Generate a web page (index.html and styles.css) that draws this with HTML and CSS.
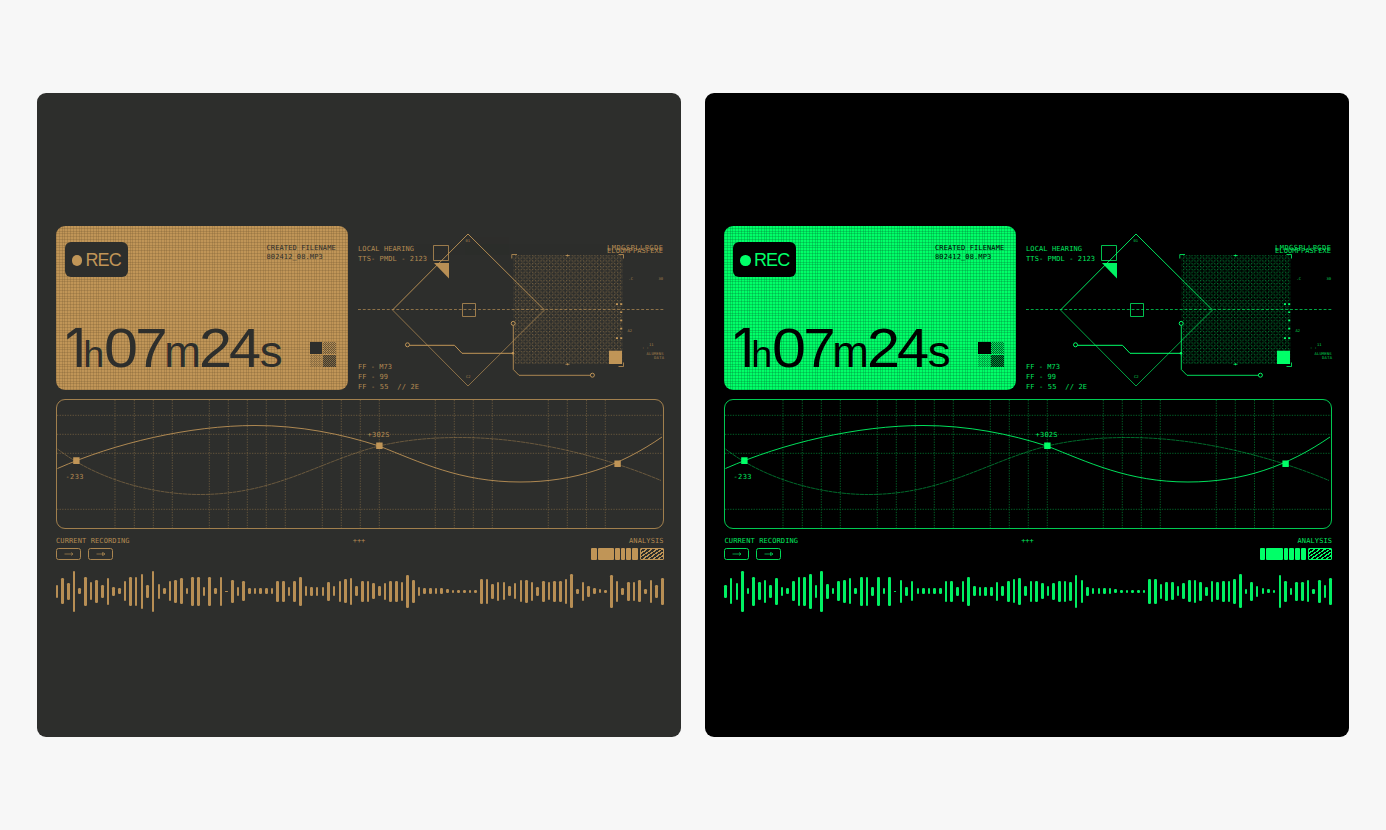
FILE: index.html
```
<!DOCTYPE html>
<html lang="en">
<head>
<meta charset="utf-8">
<title>Recorder</title>
<link rel="stylesheet" href="styles.css">
</head>
<body>
<main class="stage">
  <section class="panel amber"></section>
  <section class="panel green"></section>
</main>
<template id="recorder">
  <div class="top">
    <div class="card">
      <div class="card-head">
        <div class="rec"><i class="rec-dot"></i><span>REC</span></div>
        <p class="mono file">CREATED FILENAME<br>802412_08.MP3</p>
      </div>
      <div class="card-foot">
        <svg class="time" viewBox="0 0 226 50" aria-label="1h07m24s">
          <text class="t-one" transform="translate(-.3 43.3)">1</text>
          <text class="t-h" transform="translate(18.2 43.3) scale(1.02 1)">h</text>
          <text transform="translate(38.9 43.3) scale(1.09 1)">0</text>
          <text transform="translate(70.3 43.3) scale(1.04 1)">7</text>
          <text class="t-m" transform="translate(99.2 43.3)">m</text>
          <text transform="translate(134 43.3) scale(1.06 1)">2</text>
          <text transform="translate(164.1 43.3) scale(1.03 1)">4</text>
          <text class="t-m" transform="translate(194.8 43.3) scale(1.04 1)">s</text>
        </svg>
        <div class="swatches"><i class="s1"></i><i class="s2"></i><i class="s3"></i><i class="s4"></i></div>
      </div>
    </div>
    <svg class="scope" viewBox="358 226 307 164">
      <defs>
        <pattern class="p" id="dots" width="5.66" height="5.66" patternUnits="userSpaceOnUse"><path class="fill" d="M0 0h1.2v1.2H0zM2.83 0h1.2v1.2h-1.2zM0 2.83h1.2v1.2H0zM2.83 2.83h1.2v1.2h-1.2zM1.4 1.4h1v1h-1zM4.2 4.2h1v1h-1z"/></pattern>
      </defs>
      <rect x="513.5" y="255" width="109" height="109" fill="url(#dots)" opacity=".48"/>
      <g class="line">
        <path d="M392.5 310 468 234 544.5 310" opacity=".9"/>
        <path d="M392.5 310 468 386 544.5 310" opacity=".65"/>
        <path d="M358 309.5H664" stroke-dasharray="2.9 1.9" opacity=".65"/>
        <path d="M433.5 245.5h15v15h-15zM462.5 303.5h13v13h-13z" opacity=".75"/>
        <circle cx="407.5" cy="344.8" r="2"/>
        <path d="M409.5 345.3H454.5L462 353.3H513"/>
        <circle cx="513.2" cy="323.4" r="2"/>
        <path d="M513.3 325.5V369.5L519 375.3H590" opacity=".85"/>
        <circle cx="592.4" cy="375.2" r="2"/>
        <path d="M511.8 258.5V254.5H517M618.5 254.5H623.5V258.5M618.5 366.5H623.5V362.5M565.5 255.5h4M567.5 254.5v2M565.5 364.3h4M567.5 363.3v2" opacity=".8"/>
      </g>
      <g class="fill">
        <path d="M434 263H449V278.5Z" opacity=".95"/>
        <rect x="609" y="350.7" width="13" height="13.3"/>
        <circle cx="513" cy="353.3" r="1.3"/>
        <path d="M616 303.2h2v1.7h-2zM620.2 303.2h2v1.7h-2zM620.2 311.4h2v1.7h-2zM620.2 319.6h2v1.7h-2zM620.2 327.8h2v1.7h-2zM616 337.2h2v1.7h-2zM620.2 337.2h2v1.7h-2z"/>
      </g>
      <g class="label">
        <text x="358" y="250.5" textLength="56">LOCAL HEARING</text>
        <text x="358" y="261" textLength="69">TTS- PMDL - 2123</text>
        <text x="358" y="368.6" textLength="34">FF - M73</text>
        <text x="358" y="378.8" textLength="30">FF - 99</text>
        <text x="358" y="388.8" textLength="61">FF - 55&#160; // 2E</text>
        <text x="607" y="250.2" textLength="56">LMDGSPLLPGDE</text>
        <text x="607" y="253" textLength="56">ELOOMPPASFEXE</text>
      </g>
      <g class="tiny">
        <text x="465.5" y="241.5">01</text><text x="466" y="378">C2</text>
        <text x="628.5" y="279.5">.C</text><text x="658.5" y="279.5">30</text>
        <text x="627.5" y="331.5">A2</text><text x="642" y="349">: :</text><text x="649" y="346">11</text>
        <text x="646.5" y="354.8" textLength="17">ALUMENS</text><text x="654" y="359" textLength="10">DATA</text>
      </g>
    </svg>
  </div>
  <svg class="graph" viewBox="56 399 608.4 130">
    <g class="grid"></g>
    <path class="curve dim" d="M57.5 449C95 478 150 494.5 200 494.5C275 494.5 318 462 379 446C405 440 430 437.5 460 437.5C535 437.5 610 459 661 480.5"/>
    <path class="curve" d="M57.5 468.5C115 443 190 425.5 255 425.5C300 425.5 342 434 379 446C420 462 460 482 520 482C575 482 620 466 662 437"/>
    <rect class="frame" x="56.5" y="399.5" width="607" height="129" rx="8.5"/>
    <path class="fill" d="M73.2 457.3h6.4v6.7h-6.4zM376.2 442.5h6.4v6.5h-6.4zM614.4 460.6h6.4v6.4h-6.4z"/>
    <g class="label"><text x="65.5" y="478.8" textLength="18">-233</text><text x="367.5" y="437.2" textLength="22">+302S</text></g>
  </svg>
  <div class="legend">
    <div class="legend-left">
      <p class="mono">CURRENT RECORDING</p>
      <div class="keys">
        <span class="key"><svg viewBox="0 0 10 6"><path d="M.5 3H9M7 1.5 9 3 7 4.5"/></svg></span>
        <span class="key"><svg viewBox="0 0 10 6"><path d="M.5 3H9M7 1.5 9 3 7 4.5M6.5 1.2v3.6"/></svg></span>
      </div>
    </div>
    <p class="mono plus">+++</p>
    <div class="legend-right">
      <p class="mono">ANALYSIS</p>
      <div class="blocks"><i class="b6"></i><i class="b16"></i><i class="b4"></i><i class="b4"></i><i class="b4"></i><i class="b6"></i><i class="hatch"></i></div>
    </div>
  </div>
  <div class="wave"></div>
</template>
<script src="app.js"></script>
</body>
</html>
```
FILE: styles.css
```
* { box-sizing: border-box; }
body { margin: 0; background: #f7f7f7; font-family: "Liberation Sans", Arial, sans-serif; }
p { margin: 0; }
.stage { display: flex; gap: 24.8px; width: 1386px; height: 830px; padding: 93.4px 37px; }
.panel { width: 643.7px; height: 643.6px; flex: none; border-radius: 9px; padding: 132.8px 16px 0 19px; background: var(--bg); color: var(--ink); overflow: hidden; }
.amber { --bg: #2d2e2c; --ink: #c09557; --dot: rgba(110, 84, 46, .25); }
.green { --bg: #000; --ink: #00ff68; --dot: rgba(0, 105, 48, .27); }
.mono { font: 7px/10px "DejaVu Sans Mono", monospace; letter-spacing: .12px; }

.top { display: flex; gap: 10.5px; height: 163.7px; }
.card {
  display: flex; flex-direction: column; justify-content: space-between; flex: none;
  width: 291.5px; height: 163.5px; padding: 16px 12px 16px 8.5px; border-radius: 9px; color: var(--bg);
  background:
    repeating-linear-gradient(90deg, var(--dot) 0 1px, transparent 1px 2.83px),
    repeating-linear-gradient(0deg, var(--dot) 0 1px, transparent 1px 2.83px), var(--ink);
}
.card-head, .card-foot { display: flex; justify-content: space-between; }
.rec { display: flex; align-items: center; gap: 3px; width: 63.5px; height: 34.7px; padding: 2px 0 0 7.5px; border-radius: 6px; background: var(--bg); color: var(--ink); font-size: 18px; letter-spacing: -.8px; }
.rec-dot { width: 10.4px; height: 10.4px; flex: none; border-radius: 50%; background: var(--ink); }
.file { width: 69px; line-height: 9px; margin-top: 2px; white-space: nowrap; }
.card-foot { align-items: flex-end; }
.time { width: 226px; height: 50px; overflow: visible; fill: var(--bg); font-size: 56px; }
.t-one { font-family: Inter, sans-serif; font-size: 53px; }
.t-h { font-size: 37px; }
.t-m { font-size: 44px; }
.swatches { display: grid; grid-template-columns: 12.5px 12.5px; grid-auto-rows: 12.5px; gap: .6px; margin-bottom: 6.5px; }
.s1 { background: var(--bg); }
.s2, .s3, .s4 { background: repeating-conic-gradient(var(--bg) 0 25%, transparent 0 50%) 0 0 / 2px 2px; opacity: .55; }
.s3 { opacity: .28; }
.s4 { background-color: color-mix(in srgb, var(--bg) 45%, transparent); opacity: .85; }

.scope { width: 307px; height: 164px; flex: none; }
.fill { fill: var(--ink); }
.line, .frame, .curve { fill: none; stroke: var(--ink); stroke-width: 1; }
.label { fill: var(--ink); font: 7px "DejaVu Sans Mono", monospace; opacity: .9; }
.tiny { fill: var(--ink); font: 3.8px "DejaVu Sans Mono", monospace; opacity: .8; }

.graph { display: block; width: 608.4px; height: 130px; margin-top: 9.3px; overflow: visible; }
.grid { stroke: var(--ink); stroke-width: .9; stroke-dasharray: 1.3 1.3; opacity: .42; }
.curve { opacity: .88; }
.dim { opacity: .42; stroke-dasharray: 4 .5; }
.frame { opacity: .8; }

.legend { display: flex; justify-content: space-between; height: 36px; padding-top: 6.7px; width: 607.7px; }
.legend .mono { opacity: .9; }
.plus { margin-left: -3px; letter-spacing: 0; }
.keys { display: flex; gap: 7px; margin-top: 2.4px; }
.key { display: flex; align-items: center; justify-content: center; width: 25px; height: 11.6px; border: 1px solid var(--ink); border-radius: 2.5px; opacity: .85; }
.key svg { width: 10px; height: 6px; fill: none; stroke: var(--ink); stroke-width: .7; }
.legend-right { display: flex; flex-direction: column; align-items: flex-end; }
.blocks { display: flex; gap: 1px; height: 12px; margin-top: 2px; }
.blocks i { background: var(--ink); border-radius: 1px; }
.b4 { width: 4.7px; }
.b6 { width: 5.5px; }
.b16 { width: 16.3px; }
.blocks .hatch { width: 24px; margin-left: 1px; border: 1px solid var(--ink); background: repeating-linear-gradient(145deg, var(--ink) 0 1.2px, transparent 1.2px 2.9px); }

.wave { display: flex; align-items: center; justify-content: space-between; height: 42px; margin-top: 5px; width: 608px; margin-left: -.3px; }
.wave i { width: 2.6px; border-radius: 1.2px; background: var(--ink); opacity: .94; }
```
FILE: app.js
```
const bars = [38,78,52,122,18,88,54,68,38,80,26,18,60,88,88,104,38,122,46,18,60,68,78,18,88,88,26,88,18,88,4,68,26,60,18,
  18,18,18,18,62,62,26,62,88,30,28,28,28,58,30,62,72,80,30,62,62,48,30,52,62,62,58,98,70,28,18,18,18,18,12,10,10,
  8,8,8,76,76,46,56,54,30,48,66,68,58,28,62,54,62,62,76,102,14,56,34,18,12,8,98,64,22,58,58,66,16,68,38,80];
const columns = [115,134.3,153.3,172.3,209.3,228.3,247.3,266.3,285.3,322.3,341.3,360.3,379.3,435.3,454.3,473.3,492.3,548.3,567.3,586.5,605.3];
const rows = [415.3,434.3,453.3,509.3];
const template = document.getElementById('recorder');

document.querySelectorAll('.panel').forEach((panel, n) => {
  const view = template.content.cloneNode(true);
  view.querySelector('.p').id = 'dots' + n;
  view.querySelector('[fill="url(#dots)"]').setAttribute('fill', `url(#dots${n})`);
  view.querySelector('.grid').innerHTML =
    columns.map(x => `<path d="M${x} 400V528"/>`).join('') +
    rows.map(y => `<path d="M57 ${y}H663"/>`).join('');
  view.querySelector('.wave').innerHTML = bars.map(h => `<i style="height:${(h / 3).toFixed(1)}px"></i>`).join('');
  panel.append(view);
});
```
